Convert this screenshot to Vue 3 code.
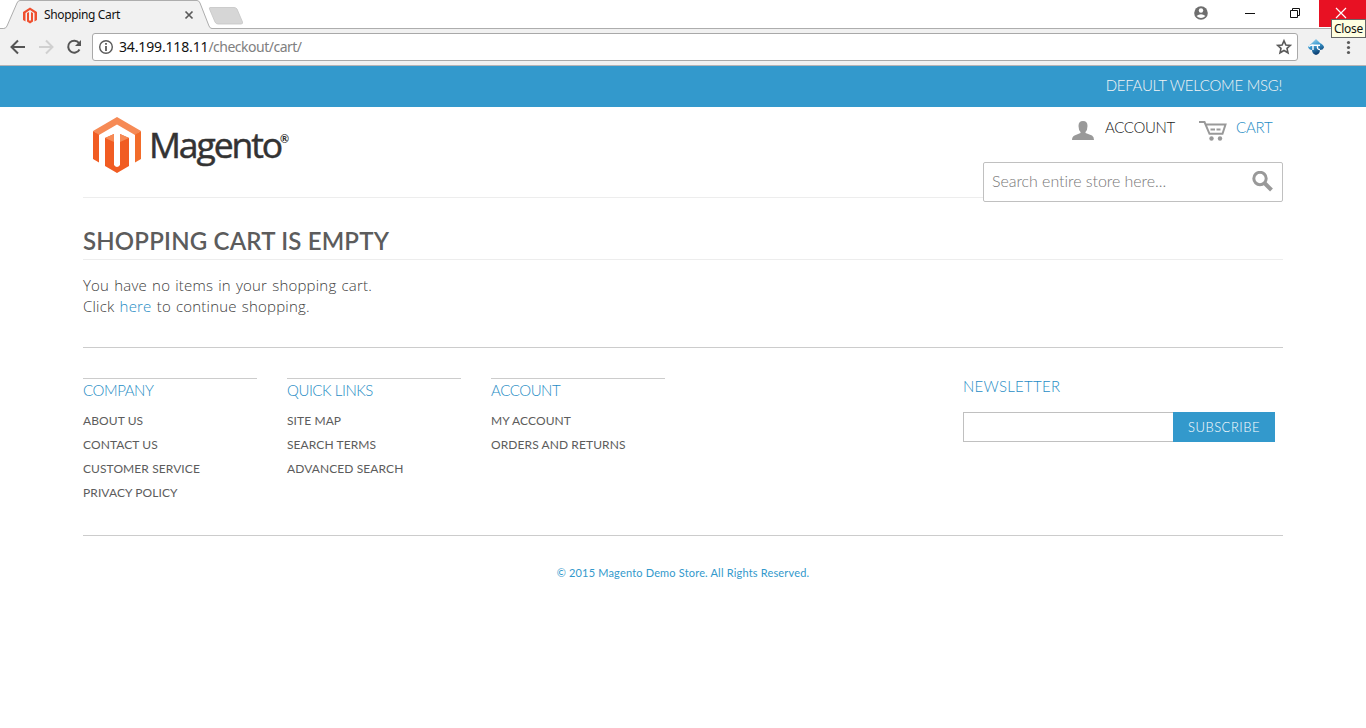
<script setup>
const columns = [
  { title: 'Company', links: ['About Us', 'Contact Us', 'Customer Service', 'Privacy Policy'] },
  { title: 'Quick Links', links: ['Site Map', 'Search Terms', 'Advanced Search'] },
  { title: 'Account', links: ['My Account', 'Orders and Returns'] },
]
</script>

<template>
  <div class="window">
    <header class="chrome">
      <svg class="tabs" width="260" height="29" viewBox="0 0 260 29">
        <path d="M0 29V28.5H3.5Q6 28.5 7 26L17 3Q18 .5 20 .5H197Q199 .5 200 3L209 26Q210 28.5 212 28.5H260V29Z" fill="#f1f1f1" />
        <path d="M0 28.5H3.5Q6 28.5 7 26L17 3Q18 .5 20 .5H197Q199 .5 200 3L209 26Q210 28.5 212 28.5H260" fill="none" stroke="#adadad" />
        <path d="M210 7.5H234Q236 7.5 237 9L242.500 22Q243 24 241 24H218Q216 24 215 22L209.500 9Q209 7.500 210 7.500Z" fill="#d6d6d6" stroke="#c4c4c4" stroke-width=".8" />
        <path d="M185.500 11.500L192.500 18.500M192.500 11.500L185.500 18.500" stroke="#5a5a5a" stroke-width="1.700" />
        <path d="M23 12L30 7.500L37 12V20L34.500 21.500V13L30 10L25.500 13V21.500L23 20Z" fill="#f0502f" />
        <path d="M27 13L29 12V20.500H31V12L33 13V21.500L30 23.500L27 21.500Z" fill="#f0502f" />
      </svg>
      <span class="tab-title">Shopping Cart</span>
      <svg class="controls" width="190" height="29" viewBox="1176 0 190 29">
        <circle cx="1201" cy="13" r="6.800" fill="#6e6e6e" />
        <circle cx="1201" cy="10.500" r="2.200" fill="#fff" />
        <path d="M1196.500 16Q1201 12.500 1205.500 16Q1201 20 1196.500 16" fill="#fff" />
        <path d="M1245 13.500H1255" stroke="#111" />
        <path d="M1290.500 10.500H1297.500V17.500H1290.500ZM1292.500 10.500V8.500H1299.500V15.500H1297.500" fill="none" stroke="#111" />
        <path d="M1319 0H1366V27H1319Z" fill="#e81123" />
        <path d="M1336 8L1346 18M1346 8L1336 18" stroke="#fff" stroke-width="1.200" />
      </svg>
      <span class="tooltip">Close</span>
    </header>
    <div class="toolbar">
      <svg class="nav" width="92" height="36" viewBox="0 29 92 36">
        <path d="M25 47H12M18 40.500L11.500 47L18 53.500" fill="none" stroke="#555" stroke-width="2" />
        <path d="M39 47H52M46 40.500L52.500 47L46 53.500" fill="none" stroke="#d0d0d0" stroke-width="2" />
        <path d="M79 43A6 6 0 1 0 79.500 49.500" fill="none" stroke="#555" stroke-width="2" />
        <path d="M81 40V46H75Z" fill="#555" />
      </svg>
      <div class="address">
        <svg width="22" height="26" viewBox="0 0 22 26">
          <circle cx="13" cy="13" r="6.300" fill="none" stroke="#5a5a5a" stroke-width="1.400" />
          <path d="M13 12V17M13 9V10.700" stroke="#5a5a5a" stroke-width="1.800" />
        </svg>
        <span class="host">34.199.118.11</span><span class="path">/checkout/cart/</span>
        <svg class="star" width="26" height="26" viewBox="0 0 26 26">
          <path d="M13 6.800L14.900 11L19.300 11.400L16 14.400L17 18.800L13 16.500L9 18.800L10 14.400L6.700 11.400L11.100 11Z" fill="none" stroke="#5a5a5a" stroke-width="1.600" />
        </svg>
      </div>
      <svg width="68" height="36" viewBox="1298 29 68 36">
        <defs>
          <linearGradient id="ext" x1="0" y1="0" x2=".4" y2="1">
            <stop offset="0" stop-color="#b5e3f5" /><stop offset=".5" stop-color="#3d9bd0" /><stop offset="1" stop-color="#0b3d70" />
          </linearGradient>
        </defs>
        <path d="M1316 39L1320 43Q1324 45 1324 47.500Q1323 50 1320 50Q1320 54 1316 55Q1312 54 1312 50Q1309 50 1308 47Q1309 45 1312 43Z" fill="url(#ext)" />
        <path d="M1309 46.500Q1311 44.500 1314 45.300H1320M1313 45.500V50M1317.500 45.500Q1317 50 1320 49.500" fill="none" stroke="#fff" stroke-width="1.400" />
        <g fill="#5a5a5a"><circle cx="1348.500" cy="42.500" r="1.600" /><circle cx="1348.500" cy="47.500" r="1.600" /><circle cx="1348.500" cy="52.500" r="1.600" /></g>
      </svg>
    </div>

    <div class="welcome"><span>Default welcome msg!</span></div>

    <main class="page">
      <div class="masthead">
        <a class="logo">
          <svg width="49" height="57" viewBox="0 0 49 57">
            <path d="M24 0L48 14L42 18L24 7.500L6 18L0 14Z" fill="#f68a55" />
            <path d="M0 14L6 17.500V45.500L0 42Z" fill="#f15c22" />
            <path d="M48 14L42 17.500V45.500L48 42Z" fill="#f26c2a" />
            <path d="M12 21L21 17V48Q24 52 27 48V17L36 21L36 49L24 56L12 49Z" fill="#f15c22" />
            <path d="M12 21L21 17V25ZM36 21L27 17V25Z" fill="#f68a55" />
          </svg>
          <span class="brand">Magento</span><span class="reg">®</span>
        </a>
        <div class="tools">
          <div class="links">
            <svg width="23" height="19" viewBox="0 0 23 19">
              <path d="M11 0Q15.500 0 15.500 5Q15.500 9 13.500 11V12L20 14.500Q22 15.500 22 19H0Q0 15.500 2.500 14.500L8.500 12V11Q6.500 9 6.500 5Q6.500 0 11 0Z" fill="#999" />
            </svg>
            <span class="account">Account</span>
            <svg class="cart-icon" width="28" height="20" viewBox="0 0 28 20">
              <path d="M0 1H5.500L10.500 12.800H23.500L26.500 3.500H7" fill="none" stroke="#999" stroke-width="2" />
              <path d="M11.500 8.500H16M17.500 8.500H21.500" stroke="#999" stroke-width="2" />
              <circle cx="12.500" cy="17.500" r="2.200" fill="#999" /><circle cx="21" cy="17.500" r="2.200" fill="#999" />
            </svg>
            <span class="cart">Cart</span>
          </div>
          <div class="search">
            <span>Search entire store here...</span>
            <svg width="22" height="22" viewBox="0 0 22 22">
              <circle cx="8" cy="7.500" r="6.200" fill="none" stroke="#999" stroke-width="3" /><path d="M12.500 12L19.500 19" stroke="#999" stroke-width="4" />
            </svg>
          </div>
        </div>
      </div>

      <h1>Shopping Cart is Empty</h1>
      <div class="message">
        <p>You have no items in your shopping cart.</p>
        <p>Click <a>here</a> to continue shopping.</p>
      </div>

      <footer>
        <section v-for="c in columns" :key="c.title" class="column">
          <h2>{{ c.title }}</h2>
          <ul><li v-for="l in c.links" :key="l">{{ l }}</li></ul>
        </section>
        <section class="newsletter">
          <h2>Newsletter</h2>
          <div class="form"><div class="field"></div><div class="button">Subscribe</div></div>
        </section>
      </footer>
      <p class="copyright">© 2015 Magento Demo Store. All Rights Reserved.</p>
    </main>
  </div>
</template>

<style>
html, body { margin: 0; background: #fff; overflow: hidden; }
</style>

<style scoped>
* { box-sizing: border-box; }
.window { width: 1366px; height: 728px; overflow: hidden; background: #fff; font-family: Lato, "Open Sans", sans-serif; color: #5c5c5c; white-space: nowrap; }
svg { display: block; flex: none; }
h1, h2, p, ul { margin: 0; padding: 0; list-style: none; }
.chrome { height: 29px; display: flex; justify-content: space-between; position: relative; background: linear-gradient(#fff 28px, #adadad 28px); }
.tab-title { position: absolute; left: 44px; top: 7px; font: 12px/16px "Noto Sans", sans-serif; letter-spacing: -.36px; color: #111; }
.tooltip { position: absolute; left: 1331px; top: 19px; width: 35px; height: 19px; border: 1px solid #666; background: #ffffe1; color: #111; font: 12px/18px "Noto Sans", sans-serif; letter-spacing: -.3px; padding-left: 2px; z-index: 2; }
.toolbar { height: 37px; display: flex; background: #f1f1f1; border-bottom: 1px solid #b6b4b6; }
.address { width: 1206px; height: 28px; margin-top: 4px; display: flex; background: #fff; border: 1px solid #a9a9a9; border-radius: 3px; font: 14px/26px "Noto Sans", sans-serif; }
.host { margin-left: 4px; color: #111; letter-spacing: -.15px; }
.path { color: #808080; letter-spacing: -.5px; }
.star { margin-left: auto; }
.welcome { height: 41px; background: #3399cc; color: #f4f4f4; text-transform: uppercase; display: flex; justify-content: flex-end; padding-right: 84px; font-size: 15px; font-weight: 300; line-height: 39px; letter-spacing: -.28px; }
.page { width: 1200px; margin: 0 auto; }
.masthead { height: 91px; display: flex; justify-content: space-between; border-bottom: 1px solid #ededed; }
.logo { display: flex; padding: 10px 0 0 10px; color: #333; }
.brand { font: 35.500px/54px "Open Sans", sans-serif; margin-left: 7px; letter-spacing: -2.100px; -webkit-text-stroke: .5px #333; }
.reg { font-size: 11px; font-weight: bold; line-height: 43px; margin-left: -1px; }
.tools { width: 300px; }
.links { height: 55px; display: flex; align-items: flex-start; padding: 14px 0 0 89px; text-transform: uppercase; font-size: 15px; font-weight: 300; line-height: 15px; letter-spacing: -.36px; color: #222; }
.account { width: 70px; margin-left: 10px; margin-top: -1px; }
.cart-icon { margin-left: 24px; }
.cart { margin-left: 9px; margin-top: -1px; letter-spacing: -.25px; color: #1f8dc5; }
.search { height: 40px; display: flex; border: 1px solid #c0c0c0; border-radius: 2px; background: #fff; padding: 0 8px; justify-content: space-between; font-size: 16px; font-weight: 300; line-height: 36px; letter-spacing: -.05px; color: #777; }
.search svg { margin-top: 8px; }
h1 { height: 62px; border-bottom: 1px solid #ededed; padding-top: 28px; font-size: 24px; line-height: 30px; font-weight: 600; letter-spacing: .18px; text-transform: uppercase; }
.message { height: 88px; padding-top: 15px; border-bottom: 1px solid #ccc; font: 300 15px/21px "Open Sans", sans-serif; letter-spacing: .2px; word-spacing: 1px; color: #404040; }
a { color: #1f8dc5; }
footer { height: 188px; display: flex; padding-top: 30px; border-bottom: 1px solid #ccc; text-transform: uppercase; }
.column { width: 174px; margin-right: 30px; border-top: 1px solid #ccc; height: 130px; }
h2 { font-size: 15px; line-height: 22px; font-weight: 300; letter-spacing: -.44px; color: #1f8dc5; }
li { font-size: 12px; line-height: 24px; letter-spacing: .09px; }
ul { padding-top: 8px; }
.newsletter { width: 320px; margin-left: auto; margin-right: 0; }
.newsletter h2 { line-height: 16px; letter-spacing: .25px; }
.form { display: flex; margin-top: 18px; }
.field { width: 210px; height: 30px; border: 1px solid #c0c0c0; border-right: 0; }
.button { width: 102px; height: 30px; background: #3399cc; color: #fff; text-align: center; font-size: 13px; line-height: 30px; font-weight: 300; letter-spacing: .5px; }
.copyright { margin-top: 29px; text-align: center; font-size: 11px; line-height: 16px; letter-spacing: .18px; color: #3399cc; }
</style>
